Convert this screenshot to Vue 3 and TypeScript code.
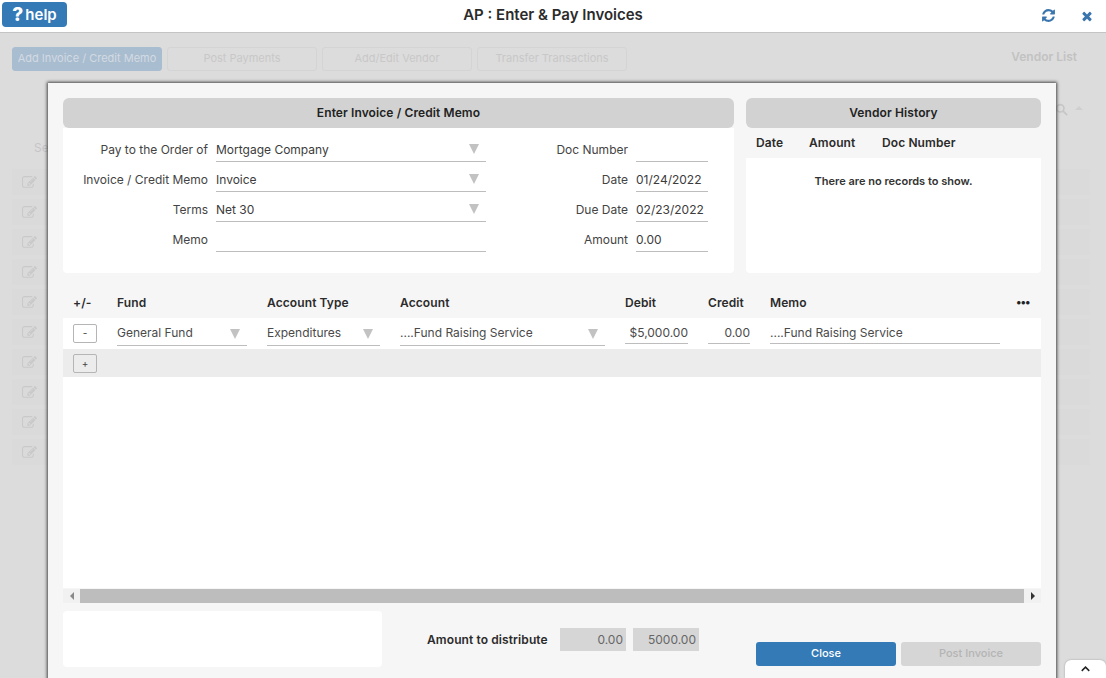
<script setup lang="ts">
interface Field {
  label: string
  value: string
  select?: boolean
}

const toolbar = ['Post Payments', 'Add/Edit Vendor', 'Transfer Transactions']

const leftFields: Field[] = [
  { label: 'Pay to the Order of', value: 'Mortgage Company', select: true },
  { label: 'Invoice / Credit Memo', value: 'Invoice', select: true },
  { label: 'Terms', value: 'Net 30', select: true },
  { label: 'Memo', value: '' },
]

const rightFields: Field[] = [
  { label: 'Doc Number', value: '' },
  { label: 'Date', value: '01/24/2022' },
  { label: 'Due Date', value: '02/23/2022' },
  { label: 'Amount', value: '0.00' },
]

const editPath =
  'M888 1184l116-116-152-152-116 116v56h96v96h56zm440-720q-16-16-33 1l-350 350q-17 17-1 33t33-1l350-350q17-17 1-33zm80 594v190q0 119-84.5 203.5t-203.5 84.5h-832q-119 0-203.5-84.5t-84.5-203.5v-832q0-119 84.5-203.5t203.5-84.5h832q63 0 117 25 15 7 18 23 3 17-9 29l-49 49q-14 14-32 8-23-6-45-6h-832q-66 0-113 47t-47 113v832q0 66 47 113t113 47h832q66 0 113-47t47-113v-126q0-13 9-22l64-64q15-15 35-7t20 29zm-96-738l288 288-672 672h-288v-288zm444 132l-92 92-288-288 92-92q28-28 68-28t68 28l152 152q28 28 28 68t-28 68z'
</script>

<template>
  <div class="page">
    <header class="top">
      <button class="help"><span class="q">?</span>help</button>
      <h1>AP : Enter &amp; Pay Invoices</h1>
      <div class="top-icons">
        <svg viewBox="0 0 1792 1792" width="15" height="15">
          <path
            fill="#3a76ad"
            d="M1639 1056q0 5-1 7-64 268-268 434.5t-478 166.5q-146 0-282.5-55t-243.5-157l-129 129q-19 19-45 19t-45-19-19-45v-448q0-26 19-45t45-19h448q26 0 45 19t19 45-19 45l-137 137q71 66 161 102t187 36q134 0 250-65t186-179q11-17 53-117 8-23 30-23h192q13 0 22.5 9.5t9.5 22.5zm25-800v448q0 26-19 45t-45 19h-448q-26 0-45-19t-19-45 19-45l138-138q-148-137-349-137-134 0-250 65t-186 179q-11 17-53 117-8 23-30 23h-199q-13 0-22.5-9.5t-9.5-22.5v-7q65-268 270-434.5t480-166.5q146 0 284 55.5t245 156.5l130-129q19-19 45-19t45 19 19 45z"
          />
        </svg>
        <svg viewBox="0 0 1792 1792" width="14" height="14">
          <path
            fill="#3a76ad"
            d="M1490 1322q0 40-28 68l-136 136q-28 28-68 28t-68-28l-294-294-294 294q-28 28-68 28t-68-28l-136-136q-28-28-28-68t28-68l294-294-294-294q-28-28-28-68t28-68l136-136q28-28 68-28t68 28l294 294 294-294q28-28 68-28t68 28l136 136q28 28 28 68t-28 68l-294 294 294 294q28 28 28 68z"
          />
        </svg>
      </div>
    </header>

    <!-- страница под модальным окном -->
    <div class="behind">
      <div class="toolbar">
        <div class="tb-btn active">Add Invoice / Credit Memo</div>
        <div v-for="t in toolbar" :key="t" class="tb-btn">{{ t }}</div>
        <div class="vendor-list">Vendor List</div>
      </div>
      <div class="search-row">
        <svg viewBox="0 0 16 16" width="13" height="13">
          <circle cx="6.5" cy="6.5" r="4.5" fill="none" stroke="#c6c6c6" stroke-width="2" />
          <path d="M10 10l5 5" stroke="#c6c6c6" stroke-width="2" />
        </svg>
        <span class="up"></span>
      </div>
      <div class="se">Se</div>
      <div class="rows">
        <div v-for="n in 10" :key="n" class="bg-row">
          <svg viewBox="0 0 1792 1792" width="15" height="15">
            <path fill="#c9c9c9" :d="editPath" />
          </svg>
        </div>
      </div>
    </div>

    <div class="modal">
      <div class="top-panels">
        <section class="panel-left">
          <h2 class="panel-title">Enter Invoice / Credit Memo</h2>
          <div class="panel-body form">
            <div class="form-col wide">
              <div v-for="f in leftFields" :key="f.label" class="field">
                <label>{{ f.label }}</label>
                <div class="input">
                  <span>{{ f.value }}</span>
                  <i v-if="f.select" class="arrow"></i>
                </div>
              </div>
            </div>
            <div class="form-col narrow">
              <div v-for="f in rightFields" :key="f.label" class="field">
                <label>{{ f.label }}</label>
                <div class="input">
                  <span>{{ f.value }}</span>
                </div>
              </div>
            </div>
          </div>
        </section>
        <section class="panel-right">
          <h2 class="panel-title">Vendor History</h2>
          <div class="hist-head">
            <span class="h-date">Date</span>
            <span class="h-amount">Amount</span>
            <span>Doc Number</span>
          </div>
          <div class="hist-body">There are no records to show.</div>
        </section>
      </div>

      <div class="grid-wrap">
        <div class="grid-row grid-head">
          <span>+/-</span>
          <span>Fund</span>
          <span>Account Type</span>
          <span>Account</span>
          <span>Debit</span>
          <span>Credit</span>
          <span>Memo</span>
          <span class="dots">•••</span>
        </div>
        <div class="grid-body">
          <div class="grid-row line">
            <button class="sq">-</button>
            <div class="cell sel w130"><span>General Fund</span><i class="arrow"></i></div>
            <div class="cell sel w113"><span>Expenditures</span><i class="arrow"></i></div>
            <div class="cell sel w205"><span>....Fund Raising Service</span><i class="arrow"></i></div>
            <div class="cell num w63">$5,000.00</div>
            <div class="cell num w42">0.00</div>
            <div class="cell w230">....Fund Raising Service</div>
          </div>
          <div class="add-row"><button class="sq">+</button></div>
        </div>
        <div class="scrollbar">
          <div class="sb-end"><i class="tri-left"></i></div>
          <div class="sb-thumb"></div>
          <div class="sb-end"><i class="tri-right"></i></div>
        </div>
      </div>

      <div class="footer">
        <div class="note"></div>
        <div class="distribute">
          <strong>Amount to distribute</strong>
          <div class="readonly first">0.00</div>
          <div class="readonly">5000.00</div>
        </div>
        <div class="actions">
          <button class="btn primary">Close</button>
          <button class="btn disabled">Post Invoice</button>
        </div>
      </div>
    </div>

    <div class="scroll-top">
      <svg viewBox="0 0 12 8" width="9" height="6">
        <path d="M1 6.5l5-5 5 5" fill="none" stroke="#222" stroke-width="2" />
      </svg>
    </div>
  </div>
</template>

<style>
body {
  margin: 0;
  overflow: hidden;
}
</style>

<style scoped>
.page {
  position: relative;
  width: 1106px;
  height: 678px;
  overflow: hidden;
  background: #dcdcdc;
  font-family: Inter, 'Liberation Sans', sans-serif;
  font-size: 12px;
  color: #444;
}

.top {
  height: 32px;
  background: #fff;
  border-bottom: 1px solid #c4c4c4;
  display: flex;
  align-items: center;
  justify-content: center;
  position: relative;
}

.top h1 {
  margin: 0 0 3px;
  font-size: 15px;
  font-weight: 600;
  color: #2b2b2b;
}

.help {
  position: absolute;
  left: 2px;
  top: 2px;
  width: 65px;
  height: 25px;
  border: 0;
  border-radius: 4px;
  background: #337ab7;
  color: #fff;
  font-family: Inter, sans-serif;
  font-size: 15px;
  font-weight: 600;
  padding: 0;
  display: flex;
  align-items: center;
  justify-content: center;
  gap: 2px;
}

.q {
  font-size: 19px;
  font-weight: 800;
}

.top-icons {
  position: absolute;
  right: 12px;
  top: 8px;
  display: flex;
  align-items: center;
  gap: 24px;
}

.toolbar {
  display: flex;
  align-items: center;
  gap: 5px;
  padding: 14px 29px 0 12px;
}

.tb-btn {
  width: 150px;
  height: 24px;
  line-height: 20px;
  text-align: center;
  font-size: 11px;
  color: #c8c8c8;
  border: 1px solid #d4d4d4;
  border-radius: 3px;
  box-sizing: border-box;
  white-space: nowrap;
}

.tb-btn.active {
  background: #a9bdd0;
  border-color: #a9bdd0;
  color: #d3dae2;
}

.vendor-list {
  margin-left: auto;
  margin-top: -6px;
  font-size: 12px;
  font-weight: 600;
  color: #c2c2c2;
}

.search-row {
  display: flex;
  justify-content: flex-end;
  align-items: center;
  gap: 7px;
  padding: 32px 23px 0 0;
}

.up {
  width: 0;
  height: 0;
  border-left: 4px solid transparent;
  border-right: 4px solid transparent;
  border-bottom: 4px solid #cfcfcf;
  margin-bottom: 4px;
}

.se {
  margin: 24px 0 0 34px;
  font-size: 12px;
  line-height: 16px;
  color: #c6c6c6;
}

.rows {
  margin-top: 13px;
  display: flex;
  flex-direction: column;
  gap: 4px;
}

.bg-row {
  height: 26px;
  margin: 0 16px 0 12px;
  background: #dadada;
  display: flex;
  align-items: center;
  padding-left: 10px;
}

.modal {
  position: absolute;
  left: 48px;
  top: 83px;
  width: 1008px;
  height: 620px;
  box-sizing: border-box;
  padding: 15px;
  background: #f6f6f6;
  box-shadow: 0 0 3px 1px #444;
}

.top-panels {
  display: grid;
  grid-template-columns: 671px 295px;
  gap: 12px;
}

.panel-title {
  margin: 0;
  height: 30px;
  line-height: 30px;
  background: #d2d2d2;
  border-radius: 6px;
  text-align: center;
  font-size: 12px;
  font-weight: 600;
  letter-spacing: 0.1px;
  color: #222;
}

.panel-body {
  background: #fff;
  height: 145px;
  border-radius: 0 0 4px 4px;
}

.form {
  display: flex;
  padding-top: 6px;
  box-sizing: border-box;
}

.form-col.wide {
  width: 423px;
}

.form-col.narrow {
  width: 222px;
}

.field {
  height: 30px;
  display: flex;
  align-items: flex-start;
  gap: 8px;
}

.field label {
  flex: 1;
  text-align: right;
  line-height: 31px;
  height: 30px;
  white-space: nowrap;
}

.wide .input {
  width: 270px;
}

.narrow .input {
  width: 72px;
}

.input {
  height: 27px;
  line-height: 31px;
  border-bottom: 1px solid #bdbdbd;
  position: relative;
  color: #3c3c3c;
  white-space: nowrap;
}

.arrow {
  position: absolute;
  right: 7px;
  top: 10px;
  width: 0;
  height: 0;
  border-left: 5px solid transparent;
  border-right: 5px solid transparent;
  border-top: 10px solid #c2c2c2;
}

.hist-head {
  height: 30px;
  line-height: 29px;
  display: flex;
  padding-left: 10px;
  font-weight: 600;
  letter-spacing: 0.1px;
  color: #2b2b2b;
}

.h-date {
  width: 53px;
}

.h-amount {
  width: 73px;
}

.hist-body {
  background: #fff;
  height: 115px;
  box-sizing: border-box;
  padding-top: 16px;
  text-align: center;
  font-size: 11px;
  font-weight: 600;
  color: #333;
  border-radius: 0 0 4px 4px;
}

.grid-wrap {
  margin-top: 18px;
}

.grid-row {
  display: grid;
  grid-template-columns: 44px 150px 133px 225px 83px 62px 246px 15px;
  padding-left: 10px;
  align-items: center;
}

.grid-head {
  height: 27px;
  padding-bottom: 4px;
  box-sizing: border-box;
  font-weight: 600;
  letter-spacing: 0.1px;
  color: #2b2b2b;
}

.dots {
  font-size: 11px;
  letter-spacing: -1px;
  color: #222;
  line-height: 10px;
  margin-top: -2px;
}

.grid-body {
  height: 270px;
  background: #fff;
}

.line {
  height: 31px;
}

.sq {
  width: 24px;
  height: 19px;
  padding: 0;
  border: 1px solid #b5b5b5;
  border-radius: 2px;
  background: #fff;
  color: #444;
  font-family: Inter, sans-serif;
  font-size: 10px;
  line-height: 15px;
}

.cell {
  height: 27px;
  line-height: 30px;
  box-sizing: content-box;
  border-bottom: 1px solid #bdbdbd;
  position: relative;
  white-space: nowrap;
  color: #4a4a4a;
  margin-bottom: 3px;
}

.cell.num,
.cell:last-child {
  height: 25px;
  line-height: 30px;
  margin-bottom: 5px;
}

.cell.num {
  text-align: right;
}

.sel .arrow {
  right: 7px;
  top: 11px;
}

.w130 {
  width: 130px;
}

.w113 {
  width: 113px;
}

.w205 {
  width: 205px;
}

.w63 {
  width: 63px;
}

.w42 {
  width: 42px;
}

.w230 {
  width: 230px;
}

.add-row {
  height: 28px;
  background: #ececec;
  padding-left: 10px;
  display: flex;
  align-items: center;
}

.add-row .sq {
  background: #ececec;
}

.scrollbar {
  height: 14px;
  margin-top: 1px;
  display: flex;
  background: #f1f1f1;
}

.sb-end {
  width: 17px;
  display: flex;
  align-items: center;
  justify-content: center;
}

.sb-thumb {
  flex: 1;
  background: #bdbdbd;
}

.tri-left,
.tri-right {
  width: 0;
  height: 0;
  border-top: 4px solid transparent;
  border-bottom: 4px solid transparent;
}

.tri-left {
  border-right: 4px solid #8a8a8a;
}

.tri-right {
  border-left: 4px solid #333;
}

.footer {
  position: relative;
  display: flex;
  margin-top: 8px;
  height: 56px;
}

.note {
  width: 319px;
  height: 56px;
  background: #fff;
  border-radius: 4px;
}

.distribute {
  margin-left: 45px;
  margin-top: 17px;
  height: 23px;
  display: flex;
  align-items: center;
}

.distribute strong {
  font-weight: 600;
  letter-spacing: 0.1px;
  color: #2b2b2b;
  margin-right: 12px;
  width: 121px;
  white-space: nowrap;
}

.readonly {
  width: 66px;
  height: 23px;
  line-height: 23px;
  background: #d6d6d6;
  text-align: right;
  padding-right: 3px;
  box-sizing: border-box;
  color: #666;
}

.readonly.first {
  margin-right: 7px;
}

.actions {
  margin-left: auto;
  margin-top: 31px;
  display: flex;
  gap: 5px;
}

.btn {
  width: 140px;
  height: 24px;
  border: 0;
  border-radius: 3px;
  font-family: Inter, sans-serif;
  font-size: 11px;
  font-weight: 500;
  padding: 0 0 2px;
}

.primary {
  background: #337ab7;
  color: #fff;
}

.disabled {
  background: #d6d6d6;
  color: #b4b4b4;
}

.scroll-top {
  position: absolute;
  right: 0;
  bottom: 0;
  width: 41px;
  height: 18px;
  background: #fff;
  border-radius: 6px 6px 0 0;
  box-shadow: 0 0 2px #999;
  display: flex;
  justify-content: center;
  padding-top: 6px;
  box-sizing: border-box;
}
</style>
